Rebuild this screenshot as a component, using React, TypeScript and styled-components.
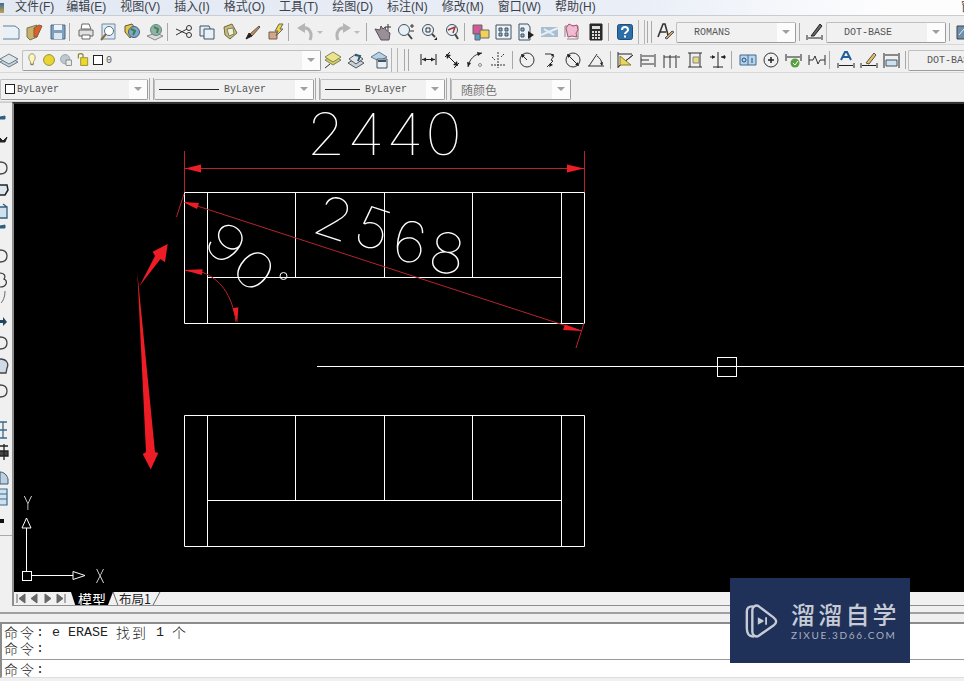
import React from 'react'
import styled, { createGlobalStyle } from 'styled-components'

const GlobalStyle = createGlobalStyle`
  html, body { margin: 0; padding: 0; background: #f0f0f0; }
`

const Page = styled.div`
  position: relative;
  width: 964px;
  height: 681px;
  overflow: hidden;
  display: flex;
  flex-direction: column;
  background: #f0f0f0;
  font-family: "Liberation Sans", "Noto Sans CJK SC", sans-serif;
`
const MenuBar = styled.div`
  height: 16px;
  flex: none;
  box-sizing: border-box;
  display: flex;
  align-items: center;
  gap: 14px;
  background: linear-gradient(to right, #e3e9f3, #e9eef7 65%, #fdfdfe 92%);
  border-bottom: 1px solid #c9ccd0;
  font-size: 12px;
  line-height: 15px;
  color: #3c4148;
  white-space: nowrap;
  overflow: hidden;
  & > span:nth-child(2) { margin-right: -2px; }
`
const AppIcon = styled.div`
  width: 4px;
  height: 10px;
  flex: none;
  margin-right: -3px;
  background: linear-gradient(#3e6c96, #c2a24c);
`
const MenuTail = styled.span`
  width: 3px;
  margin-left: auto;
  overflow: hidden;
  flex: none;
`
const Toolbar = styled.div<{ $height: number; $top: number }>`
  height: ${(p) => p.$height}px;
  padding-top: ${(p) => p.$top}px;
  flex: none;
  box-sizing: border-box;
  display: flex;
  align-items: center;
  background: #f0f0f0;
  border-bottom: 1px solid #d8d8d8;
  overflow: hidden;
`
const Cell = styled.div<{ $w?: number; $shift?: number }>`
  width: ${(p) => p.$w ?? 23}px;
  margin-left: ${(p) => p.$shift ?? 0}px;
  height: 20px;
  flex: none;
  display: flex;
  align-items: center;
  justify-content: center;
`
const Sep = styled.div<{ $l?: number; $r?: number }>`
  width: 1px;
  height: 18px;
  flex: none;
  background: #a8a8a8;
  margin: 0 ${(p) => p.$r ?? 4}px 0 ${(p) => p.$l ?? 1}px;
`
const GroupEnd = styled.div<{ $l: number; $r: number }>`
  width: 5px;
  height: 24px;
  flex: none;
  margin: 0 ${(p) => p.$r}px 0 ${(p) => p.$l}px;
  border-left: 1px solid #b5b5b5;
  border-right: 1px solid #b5b5b5;
`
const Combo = styled.div<{ $w: number; $l?: number; $r?: number }>`
  width: ${(p) => p.$w}px;
  height: 21px;
  flex: none;
  box-sizing: border-box;
  margin: 0 ${(p) => p.$r ?? 0}px 0 ${(p) => p.$l ?? 0}px;
  display: flex;
  align-items: center;
  background: #f1f1f1;
  border: 1px solid #c0c0c0;
  border-right-color: #9c9c9c;
  border-bottom-color: #9c9c9c;
  border-radius: 2px;
  overflow: hidden;
`
const ComboText = styled.div<{ $pad?: number; $gap?: number }>`
  flex: 1;
  min-width: 0;
  padding-left: ${(p) => p.$pad ?? 0}px;
  display: flex;
  align-items: center;
  gap: ${(p) => p.$gap ?? 4}px;
  font: 10px "Liberation Mono", monospace;
  color: #555;
  white-space: nowrap;
`
const ComboCn = styled.span`
  font: 12px "Noto Sans CJK SC", sans-serif;
  color: #777;
`
const ComboArrow = styled.div`
  width: 18px;
  align-self: stretch;
  flex: none;
  background: #fcfcfc;
  display: flex;
  align-items: center;
  justify-content: center;
  &::after {
    content: "";
    border-left: 4px solid transparent;
    border-right: 4px solid transparent;
    border-top: 4px solid #a0a0a0;
  }
`
const LineSample = styled.div<{ $w: number }>`
  width: ${(p) => p.$w}px;
  height: 1px;
  background: #222;
  margin-right: 1px;
  flex: none;
`
const ColorSwatch = styled.div`
  width: 8px;
  height: 8px;
  border: 1px solid #222;
  background: #fff;
  flex: none;
`
const Dropper = styled.div`
  border-left: 3px solid transparent;
  border-right: 3px solid transparent;
  border-top: 3px solid #bcbcbc;
`
const Grips = styled.div<{ $l: number; $r: number }>`
  width: 3px;
  height: 22px;
  flex: none;
  margin: 0 ${(p) => p.$r}px 0 ${(p) => p.$l}px;
  border-left: 1px solid #a9a9a9;
  border-right: 1px solid #a9a9a9;
`
const Main = styled.div`
  display: flex;
  flex: none;
  height: 504px;
`
const Strip = styled.div`
  width: 12px;
  flex: none;
  overflow: hidden;
  display: flex;
  flex-direction: column;
  box-sizing: border-box;
  height: 434px;
  background: #f0f0f0;
  border-top: 1px solid #ccc;
  border-bottom: 1px solid #aaa;
`
const StripItem = styled.div<{ $gap: number }>`
  margin-top: ${(p) => p.$gap}px;
  margin-left: -9px;
  height: 14px;
  flex: none;
`
const Work = styled.div`
  flex: 1;
  min-width: 0;
  display: flex;
  flex-direction: column;
`
const Canvas = styled.div`
  height: 490px;
  flex: none;
  background: #000;
  border-left: 2px solid #8e8e8e;
  border-top: 2px solid #333;
  box-sizing: border-box;
  & svg { display: block; }
`
const TabBar = styled.div`
  height: 14px;
  flex: none;
  display: flex;
  align-items: stretch;
  background: #f1f1f1;
  border-left: 2px solid #8e8e8e;
  border-bottom: 1px solid #8e8e8e;
  box-sizing: border-box;
`
const NavBtn = styled.div`
  width: 13.5px;
  flex: none;
  display: flex;
  align-items: center;
  justify-content: center;
`
const ModelTab = styled.div`
  width: 42px;
  margin-left: 3px;
  flex: none;
  background: #000;
  color: #fff;
  font: 14px/14px "Noto Sans CJK SC", sans-serif;
  text-align: center;
  clip-path: polygon(0 0, 100% 0, 88% 100%, 10% 100%);
`
const LayoutTab = styled.div`
  position: relative;
  width: 47px;
  box-sizing: border-box;
  padding-left: 6px;
  flex: none;
  font: 12.5px/13px "Noto Sans CJK SC", sans-serif;
  color: #222;
  white-space: nowrap;
  &::before,
  &::after {
    content: "";
    position: absolute;
    top: 0;
    height: 13px;
    width: 1px;
    background: #666;
  }
  &::before {
    left: 2px;
    transform: skewX(20deg);
  }
  &::after {
    right: 3px;
    transform: skewX(-28deg);
  }
`
const Command = styled.div`
  flex: 1;
  display: flex;
  flex-direction: column;
  background: #f0f0f0;
`
const SplitLine = styled.div`
  margin-top: 6px;
  height: 2px;
  flex: none;
  background: #a0a0a0;
`
const CommandBox = styled.div`
  margin-top: 8px;
  background: #fff;
  border-top: 2px solid #8c8c8c;
  border-left: 2px solid #8c8c8c;
  padding-left: 2px;
  height: 37px;
  flex: none;
  box-sizing: border-box;
  display: flex;
  flex-direction: column;
`
const CommandRow = styled.div<{ $h?: number }>`
  height: ${(p) => p.$h ?? 16}px;
  flex: none;
  display: flex;
  align-items: center;
  font: 13.33px/15px "Liberation Mono", monospace;
  white-space: pre;
  color: #222;
`
const Cn = styled.span`
  font: 300 14px/15px "Noto Sans CJK SC", sans-serif;
  letter-spacing: 2px;
`
const InputBox = styled(CommandBox)`
  margin-top: 0;
  height: 19px;
  border-top: 1px solid #9a9a9a;
  border-bottom: 1px solid #ddd;
`
const Logo = styled.div`
  position: absolute;
  left: 730px;
  top: 578px;
  width: 180px;
  height: 85px;
  background: #1f3158;
  color: #c6cbd5;
  display: flex;
  align-items: center;
  padding-left: 15px;
  box-sizing: border-box;
  gap: 13px;
`
const LogoText = styled.div`
  display: flex;
  flex-direction: column;
  margin-top: -1px;
`
const LogoName = styled.div`
  font: 500 24px/30px "Noto Sans CJK SC", sans-serif;
  letter-spacing: 3.2px;
  white-space: nowrap;
`
const LogoSite = styled.div`
  font: 10px/12px "Lato", sans-serif;
  letter-spacing: 1.7px;
  color: #a9b0bf;
  white-space: nowrap;
`
const SmallIcon = styled.div`
  width: 14px;
  height: 14px;
  flex: none;
  & svg { width: 14px; height: 14px; display: block; }
`

const I = ({ children }: { children: React.ReactNode }) => (
  <svg width="18" height="18" viewBox="0 0 18 18" fill="none" stroke="#3e5364" strokeWidth="1">
    {children}
  </svg>
)

const dim = (
  <>
    <path d="M1 3v11M16 3v11M2 8.500h13" stroke="#222" />
    <path d="M2 8.500l4-2v4zM15 8.500l-4-2v4z" fill="#222" stroke="none" />
  </>
)
const circle = <circle cx="9" cy="9" r="7" stroke="#333" />

const icons: Record<string, React.ReactNode> = {
  new: <path d="M-2 3h14l4 3v10H-2z" fill="#e9f0f6" stroke="#5c7f9b" />,
  open: (
    <>
      <path d="M1 5l10-3v12l-7 3-3-3z" fill="#c9b06a" stroke="#6e7a55" />
      <path d="M8 5l5-3 3 1-5 11H8z" fill="#d95f2b" stroke="#8a5a3a" />
    </>
  ),
  save: (
    <>
      <path d="M2 2h14v14H2z" fill="#7e9fbe" stroke="#4b6a86" />
      <path d="M5 2h8v5H5z" fill="#eef3f7" stroke="none" />
      <path d="M5 10h8v6H5z" fill="#dce6ef" stroke="none" />
    </>
  ),
  print: (
    <>
      <path d="M5 1h7l2 5H4z" fill="#fff" stroke="#666" />
      <path d="M2 7h14v6H2z" fill="#e2e2e2" stroke="#666" />
      <path d="M5 12h8v4H5z" fill="#fff" stroke="#666" />
    </>
  ),
  preview: (
    <>
      <path d="M2 1h13v15H2z" fill="#dfeaf3" stroke="#6d8ba3" />
      <circle cx="9" cy="8" r="4.500" fill="#fff" stroke="#53707f" />
      <path d="M6 11l-5 6" strokeWidth="2" stroke="#8a6a3a" />
    </>
  ),
  publish: (
    <>
      <path d="M2 3l7-2 4 5-6 9-5-6z" fill="#e8c83c" stroke="#555" />
      <circle cx="11" cy="9" r="5.500" fill="#7fa8cc" stroke="#44617a" />
      <path d="M8 6l4 2-2 4" stroke="#3f7d4c" strokeWidth="2" />
    </>
  ),
  plot: (
    <>
      <path d="M1 13l9-3 7 3-8 4z" fill="#ddd" stroke="#888" />
      <circle cx="10" cy="7" r="5.500" fill="#8fb4a6" stroke="#688" />
      <path d="M8 4l4 2-1 4" stroke="#4c7f5c" strokeWidth="2" />
    </>
  ),
  cut: (
    <>
      <path d="M1 6l11 5M1 12l11-6" stroke="#333" />
      <circle cx="14" cy="5" r="2.500" stroke="#333" />
      <circle cx="14" cy="12" r="2.500" stroke="#333" />
    </>
  ),
  copy: (
    <>
      <path d="M2 3h9l1 2v8H2z" fill="#e4edf5" />
      <path d="M6 6h10v10H6z" fill="#e9f1f8" />
    </>
  ),
  paste: (
    <>
      <path d="M3 4l8-3 5 9-7 6-5-4z" fill="#d0b878" stroke="#6e6a4a" />
      <path d="M6 6l6-1 1 6-5 2z" fill="#eef2df" stroke="#6f8a5a" />
    </>
  ),
  brush: (
    <>
      <path d="M6 11l9-8 1 1-8 9z" fill="#d88a4a" stroke="#555" />
      <path d="M2 16l3-6 3 3z" fill="#222" stroke="#222" />
    </>
  ),
  match: (
    <>
      <path d="M2 9h8v7H2z" fill="#d3a888" stroke="#7a5a4a" />
      <path d="M12 1l-4 7h3l-2 5 7-7h-3l3-5z" fill="#f2d43c" stroke="#666" />
    </>
  ),
  undo: (
    <>
      <path d="M14 17C17 10 13 4 7 5" stroke="#b5b5b5" strokeWidth="3" />
      <path d="M9 0L1 5l8 5z" fill="#b5b5b5" stroke="none" />
    </>
  ),
  redo: (
    <>
      <path d="M4 17C1 10 5 4 11 5" stroke="#b5b5b5" strokeWidth="3" />
      <path d="M9 0l8 5-8 5z" fill="#b5b5b5" stroke="none" />
    </>
  ),
  pan: (
    <>
      <path d="M1 6l6 11h8l1-7-4-3-1-3-2 2-2-3-1 4z" fill="#9a8f96" stroke="#5a5058" />
      <path d="M14 1v7M11 4h6" stroke="#333" />
    </>
  ),
  zoomrt: (
    <>
      <circle cx="7" cy="7" r="5.500" fill="#e8f0f6" />
      <path d="M11 11l4 5" strokeWidth="2" stroke="#444" />
      <path d="M13 3h4M15 1v4M13 8h4" stroke="#333" />
    </>
  ),
  zoomwin: (
    <>
      <circle cx="8" cy="7" r="5.500" fill="#e8f0f6" />
      <path d="M6 5h4v4H6z" stroke="#333" />
      <path d="M12 11l3 3" strokeWidth="2" stroke="#444" />
      <path d="M14 17h3v-3z" fill="#222" stroke="none" />
    </>
  ),
  zoomprev: (
    <>
      <circle cx="9" cy="7" r="5.500" fill="#e8f0f6" />
      <path d="M5 7l7-3-2 6" stroke="#a03838" strokeWidth="1.500" />
      <path d="M12 11l3 5" strokeWidth="2" stroke="#444" />
    </>
  ),
  props: (
    <>
      <path d="M1 2h9v9H1z" fill="#d05a9a" stroke="#666" />
      <path d="M8 7h9v8H8z" fill="#f3d05a" stroke="#666" />
      <path d="M3 11h5v6H3z" fill="#5aa0d0" stroke="#666" />
    </>
  ),
  grid: (
    <>
      <path d="M1 2h15v14H1z" fill="#eef3f7" />
      <path d="M4 5h3v3H4zM10 5h3v3h-3zM4 10h3v3H4zM10 10h3v3h-3z" fill="#8fb0cc" />
    </>
  ),
  sheet: (
    <>
      <path d="M1 1h9l2 3v13H1z" fill="#e9f0f6" />
      <path d="M3 5h3v3H3zM3 11h3v3H3z" fill="#8fb0cc" />
      <path d="M10 8l6 4-6 4z" fill="#222" stroke="none" />
    </>
  ),
  tools: (
    <>
      <path d="M0 4h17v10H0z" fill="#a8bfd2" stroke="none" />
      <path d="M0 12l17-7M3 6l10 6" stroke="#e7eef4" strokeWidth="2" />
    </>
  ),
  mark: (
    <>
      <path d="M1 14V3h13v13H3" stroke="#888" />
      <path d="M2 5l3-4 4 2 4-1 1 5-2 3 1 4-5-1-4 1z" fill="#eebbd0" stroke="#b04a70" />
    </>
  ),
  calc: (
    <>
      <path d="M3 1h12v16H3z" fill="#2c2c2c" stroke="#222" />
      <path d="M5 3h8v3H5z" fill="#ddd" stroke="none" />
      <path d="M5 8h2v2H5zM8 8h2v2H8zM11 8h2v2h-2zM5 11h2v2H5zM8 11h2v2H8zM11 11h2v2h-2zM5 14h2v2H5zM8 14h2v2H8zM11 14h2v2h-2z" fill="#ddd" stroke="none" />
    </>
  ),
  help: (
    <>
      <rect x="1.500" y="1.500" width="15" height="15" rx="2" fill="#2b6ea8" stroke="#1f4f7d" />
      <path d="M6 7c0-4 6-4 6 0 0 2-3 2-3 4" stroke="#fff" strokeWidth="2" />
      <path d="M8 12.500h2v2H8z" fill="#fff" stroke="none" />
    </>
  ),
  tstyle: (
    <>
      <path d="M1 14L6 1h2l3 11M3 9h6" stroke="#333" strokeWidth="1.600" />
      <path d="M8 15l7-7 2 1-7 7z" fill="#c8a46a" stroke="#555" />
    </>
  ),
  dstyle: (
    <>
      <path d="M1 12v5M16 12v5M2 15h13" stroke="#222" />
      <path d="M5 13l9-12 2 2-8 10z" fill="#666" stroke="#222" />
    </>
  ),
  dmanager: (
    <>
      <path d="M1 3h16v13H1z" fill="#6d8fae" stroke="#444" />
      <path d="M3 12l5-6 3 3 4-3" stroke="#eee" />
    </>
  ),
  layers: (
    <>
      <path d="M0 11l9-5 9 5-9 5z" fill="#c7d2da" stroke="#6b7b88" />
      <path d="M0 8l9-5 9 5-9 5z" fill="#dfe6ea" stroke="#6b7b88" />
    </>
  ),
  layerA: (
    <>
      <path d="M1 9l8-5 8 5-8 5z" fill="#d8c85a" stroke="#786" />
      <path d="M1 6l8-5 8 5-8 5z" fill="#eee38a" stroke="#786" />
      <path d="M1 17l5-4" stroke="#333" />
    </>
  ),
  layerB: (
    <>
      <path d="M1 12l8-5 8 5-8 5z" fill="#c7d2da" stroke="#555" />
      <path d="M2 8l7-5 7 5-7 5z" fill="#dfe6ea" stroke="#555" />
      <path d="M8 4l5 1-2 5" stroke="#33566f" strokeWidth="2" />
    </>
  ),
  layerC: (
    <>
      <path d="M1 6l8-5 8 5-8 4z" fill="#b9d0e3" stroke="#5a7d9a" />
      <path d="M7 8h10v9H7z" fill="#e8f0f6" stroke="#3e5364" />
      <path d="M8 10h8" stroke="#3e5364" strokeWidth="2" />
    </>
  ),
  dimLinear: dim,
  dimAligned: (
    <>
      <path d="M2 6l5-5M11 17l5-5M4 4l10 10" stroke="#222" />
      <path d="M3 3l5 1-4 4zM15 15l-5-1 4-4z" fill="#222" stroke="none" />
    </>
  ),
  dimArc: (
    <>
      <path d="M2 16C3 9 8 3 16 2" stroke="#333" />
      <path d="M2 16l-1-5 4 1zM16 2l-5-1 1 4z" fill="#222" stroke="none" />
      <circle cx="14" cy="14" r="1.500" stroke="#888" />
    </>
  ),
  dimOrd: <path d="M9 1v16M2 14h14M3 6l3 3M15 3l-3 3" stroke="#333" strokeDasharray="2 1" />,
  dimRadius: (
    <>
      {circle}
      <path d="M9 9L4 4" stroke="#222" />
      <path d="M3 3l4 1-3 3z" fill="#222" stroke="none" />
    </>
  ),
  dimJog: (
    <>
      <path d="M4 3h6l3 2-3 4 2 1-6 6" stroke="#333" />
      <path d="M8 16l1-4 3 2zM13 3l-3 0 1 3z" fill="#222" stroke="none" />
    </>
  ),
  dimDia: (
    <>
      {circle}
      <path d="M4 4l10 10" stroke="#222" />
      <path d="M3 3l4 1-3 3zM15 15l-4-1 3-3z" fill="#222" stroke="none" />
    </>
  ),
  dimAngle: (
    <>
      <path d="M1 15h16M2 15L10 3" stroke="#333" />
      <path d="M10 5c3 2 5 5 5 9" stroke="#333" />
      <path d="M15 15l-2-3 3-1z" fill="#222" stroke="none" />
    </>
  ),
  dimQuick: (
    <>
      <path d="M1 1v16M1 16L16 4z" stroke="#333" />
      <path d="M3 5l11 9H3z" fill="#e8d560" stroke="#8a7a30" />
      <path d="M1 3h14" stroke="#222" />
    </>
  ),
  dimBase: <path d="M1 3v13M15 3v13M2 5h12M2 13h12M1 9h8" stroke="#333" />,
  dimCont: <path d="M1 4v13M7 4v13M13 4v13M1 6h12M14 6h3" stroke="#333" />,
  dimSpace: (
    <>
      <path d="M2 2h14M2 16h14M4 2v14M14 2v14" stroke="#333" />
      <path d="M7 6h6v6H7z" fill="#e4d98a" stroke="#887" />
    </>
  ),
  dimBreak: (
    <>
      <path d="M1 6h5M12 6h5M9 1v16M4 16h10" stroke="#222" />
      <path d="M12 6l4-2v4zM6 6L3 4v4z" fill="#222" stroke="none" />
    </>
  ),
  tol: (
    <>
      <path d="M1 4h16v10H1z" fill="#b8d3ea" stroke="#3c6a90" />
      <path d="M9 4v10" stroke="#3c6a90" />
      <circle cx="5" cy="9" r="2" stroke="#1f4f7d" />
      <path d="M13 7v5" stroke="#1f4f7d" />
    </>
  ),
  center: (
    <>
      {circle}
      <path d="M6 9h6M9 6v6" stroke="#222" strokeWidth="1.500" />
    </>
  ),
  insp: (
    <>
      <path d="M1 3v7M16 3v7M2 6h13" stroke="#222" />
      <circle cx="10" cy="12" r="4.500" fill="#5aa040" stroke="none" />
      <path d="M8 12l2 2 3-4" stroke="#fff" />
    </>
  ),
  jog: <path d="M1 4v10M1 9h4l2-4 3 8 2-4h5M17 4v10" stroke="#333" />,
  dimText: (
    <>
      <path d="M4 9l4-8h2l4 8M6 6h6" stroke="#20609a" strokeWidth="2" />
      <path d="M1 12v5M17 12v5M2 14.500h14" stroke="#222" />
    </>
  ),
  dimEdit: (
    <>
      <path d="M1 12v5M17 12v5M2 14.500h14" stroke="#222" />
      <path d="M6 12l8-10 2 2-7 9z" fill="#e6bf5a" stroke="#555" />
    </>
  ),
  dimUpdate: (
    <>
      <path d="M1 2v15M16 2v15M2 4h13" stroke="#222" />
      <path d="M3 9h11v6H3z" fill="#cfe0ee" stroke="#3e5364" />
    </>
  ),
  bulb: (
    <>
      <path d="M9 1c5 0 5 7 2 10v3H7v-3C4 8 4 1 9 1z" fill="#fbf5c0" stroke="#8a8450" />
      <path d="M7 15h4" stroke="#555" />
    </>
  ),
  sun: <circle cx="9" cy="9" r="7" fill="#e8d532" stroke="#857a2a" />,
  vp: (
    <>
      <circle cx="8" cy="8" r="6" fill="#bfc8ce" stroke="#8a9aa4" />
      <path d="M9 9h7v7H9z" fill="#eee" stroke="#777" />
    </>
  ),
  lock: (
    <>
      <path d="M3 7V3c0-3 6-3 6 0v2" stroke="#8a8020" strokeWidth="1.500" />
      <path d="M6 6h9v10H6z" fill="#ecd92e" stroke="#8a8020" />
    </>
  ),
  // the side strip is cropped, only the right end of each tool shows
  sDash: <path d="M9 8l5-1v3H9z" fill="#2f5f80" stroke="#2f5f80" />,
  sCheck: <path d="M9 7l3 3 4-4-2 5H9z" fill="#222" stroke="#222" />,
  sRing: <path d="M9 3c5 0 7 3 7 6s-2 6-7 6" stroke="#444" strokeWidth="1.300" />,
  sHex: <path d="M9 4h7l1 5-3 5H9" fill="#dde7f0" stroke="#222" strokeWidth="1.500" />,
  sBox: <path d="M9 4h7v11H9M12 1l4 3" fill="#cfe0ee" stroke="#2f5f80" strokeWidth="1.300" />,
  sBlob: <path d="M9 2c7 0 9 5 7 9l-1 5H9" fill="#cfdce8" stroke="#444" strokeWidth="1.300" />,
  sCloud: <path d="M9 2c5 0 6 4 4 6 4 2 3 8-4 8" stroke="#333" strokeWidth="1.200" />,
  sCurve: <path d="M14 3c0 6-2 10-4 12" stroke="#666" />,
  sArrow: <path d="M9 7h3V4l4 5-4 4v-3H9z" fill="#20455f" stroke="none" />,
  sDimA: <path d="M9 1h7M12 1v16M9 9h7M9 17h7" stroke="#3a6a8c" strokeWidth="1.300" />,
  sDimB: <path d="M9 3h8M13 1v16M9 8h8v5H9" fill="#444" stroke="#222" strokeWidth="1.300" />,
  sArch: <path d="M9 3c4 0 7 3 8 7v5H9z" fill="#bcd0e2" stroke="#3e5a70" />,
  sList: <path d="M9 1h7v16H9M9 6h7M9 11h7" fill="#cfe0ee" stroke="#3a6a8c" strokeWidth="1.200" />,
  sDot: <path d="M9 7h4v4H9z" fill="#111" stroke="none" />,
}

const Tool = ({ name, w, shift }: { name: string; w?: number; shift?: number }) => (
  <Cell $w={w} $shift={shift}>
    <I>{icons[name]}</I>
  </Cell>
)

const menu = ['文件(F)', '编辑(E)', '视图(V)', '插入(I)', '格式(O)', '工具(T)', '绘图(D)', '标注(N)', '修改(M)', '窗口(W)', '帮助(H)']

const strip: [number, string][] = [
  [6, 'sDash'], [8, 'sCheck'], [14, 'sRing'], [8, 'sHex'], [8, 'sBox'],
  [1, 'sDash'], [15, 'sRing'], [10, 'sCloud'], [3, 'sCurve'], [11, 'sArrow'],
  [7, 'sRing'], [9, 'sBlob'], [11, 'sRing'], [25, 'sDimA'], [8, 'sDimB'],
  [12, 'sArch'], [5, 'sList'], [10, 'sDot'],
]

const ToolGroup = ({ names }: { names: string[] }) => (
  <>
    {names.map((n) => (
      <Tool key={n} name={n} />
    ))}
  </>
)

const Digit = ({ ch, x, y, size = 58, rot = 0, sx = 1.08, weight = 100 }: { ch: string; x: number; y: number; size?: number; rot?: number; sx?: number; weight?: number }) => (
  <text
    transform={`translate(${x} ${y}) rotate(${rot}) scale(${sx} 1)`}
    textAnchor="middle"
    dominantBaseline="central"
    fontFamily="Inter, sans-serif"
    fontWeight={weight}
    fontSize={size}
    fill="#fff"
    stroke="none"
  >
    {ch}
  </text>
)

const Frame = ({ top, mid, bottom }: { top: number; mid: number; bottom: number }) => (
  <path
    d={`M184.500 ${top}H584.500V${bottom}H184.500ZM207.500 ${top}V${bottom}M561.500 ${top}V${bottom}M295.500 ${top}V${mid}M384.500 ${top}V${mid}M472.500 ${top}V${mid}M207.500 ${mid}H561.500`}
  />
)

const Drawing = () => (
  <svg width="950" height="488" viewBox="14 104 950 488" fill="none" stroke="#fff" strokeWidth="1">
    <Frame top={192.5} mid={277.5} bottom={323.5} />
    <Frame top={415.5} mid={500.5} bottom={546.5} />
    <path d="M317 366.500H964" />
    <rect x="717.500" y="357.500" width="19" height="19" />
    <circle cx="283.500" cy="276" r="3.500" />

    <g opacity="0.999">
      <Digit ch="2" x={326} y={134} />
      <Digit ch="4" x={366} y={134} />
      <Digit ch="4" x={405} y={134} />
      <Digit ch="0" x={443.500} y={134} />
      <Digit ch="9" x={226} y={243} size={50} rot={40} sx={1.3} />
      <Digit ch="0" x={254} y={270} size={50} rot={40} sx={1.3} />
      <Digit ch="2" x={334} y={218} size={56} rot={18} />
      <Digit ch="5" x={373} y={228} size={56} rot={18} />
      <Digit ch="6" x={410} y={242} size={56} rot={8} />
      <Digit ch="8" x={447} y={253} size={56} rot={8} />
      <Digit ch="X" x={100} y={576.500} size={18} sx={0.75} weight={200} />
      <Digit ch="Y" x={28} y={503.500} size={18} sx={0.75} weight={200} />
    </g>

    <g stroke="#b5252a">
      <path d="M184.500 151V192M584.500 151V192M185 168.500H584" />
      <path d="M185 202L582 331" />
      <path d="M184 194L176.500 217M584 323L576 348" />
      <path d="M185 270.500L203 272.500C219 279 232 293 236 322" />
    </g>
    <g fill="#ee1c25" stroke="none">
      <path d="M185 168.500L201 164.500V172.500Z" />
      <path d="M584 168.500L567 164.500V172.500Z" />
      <path d="M183 202L199 203L197 209Z" />
      <path d="M582 331L565 324.500L563 330Z" />
      <path d="M184 270L202.700 269.300L201.700 275Z" />
      <path d="M237.300 322.700L232.700 308.300L238.300 307.300Z" />
      <path d="M139.500 286L155 256L152.700 251.700L167.700 244L165 262.300L160.500 259Z" />
      <path d="M137.300 272L146 452L142.700 454L150.700 469.500L158.300 453L155 452Z" />
    </g>

    <path d="M26.500 571V528M32 575.500H73" />
    <rect x="22.500" y="571.500" width="9" height="9" />
    <path d="M26.500 518L22 528H31Z" />
    <path d="M73 571.500V579.500L85 575.500Z" />
  </svg>
)

const Nav = ({ d }: { d: string }) => (
  <NavBtn>
    <svg width="10" height="11" viewBox="0 0 10 11" fill="#666" stroke="#666">
      <path d={d} />
    </svg>
  </NavBtn>
)

export default function App() {
  return (
    <Page>
      <GlobalStyle />
      <MenuBar>
        <AppIcon />
        {menu.map((m) => (
          <span key={m}>{m}</span>
        ))}
        <MenuTail>窗</MenuTail>
      </MenuBar>

      <Toolbar $height={29} $top={4}>
        <ToolGroup names={['new', 'open', 'save']} />
        <Sep $l={0} />
        <ToolGroup names={['print', 'preview', 'publish', 'plot']} />
        <Sep />
        <ToolGroup names={['cut', 'copy', 'paste', 'brush', 'match']} />
        <Sep />
        <Tool name="undo" />
        <Cell $w={8}><Dropper /></Cell>
        <Tool name="redo" shift={7} />
        <Cell $w={6}><Dropper /></Cell>
        <Sep $l={6} />
        <ToolGroup names={['pan', 'zoomrt', 'zoomwin', 'zoomprev']} />
        <Sep />
        <ToolGroup names={['props', 'grid', 'sheet', 'tools', 'mark', 'calc']} />
        <Sep />
        <Tool name="help" />
        <GroupEnd $l={2} $r={2} />
        <Grips $l={0} $r={2} />
        <Tool name="tstyle" />
        <Combo $w={120} $l={-1}>
          <ComboText $pad={17}>ROMANS</ComboText>
          <ComboArrow />
        </Combo>
        <Sep $l={3} $r={3} />
        <Tool name="dstyle" />
        <Combo $w={120}>
          <ComboText $pad={17}>DOT-BASE</ComboText>
          <ComboArrow />
        </Combo>
        <Sep $l={3} $r={3} />
        <Tool name="dmanager" />
      </Toolbar>

      <Toolbar $height={28} $top={3}>
        <Tool name="layers" shift={-3} />
        <Combo $w={299} $l={2}>
          <ComboText $pad={2} $gap={3}>
            <SmallIcon><I>{icons.bulb}</I></SmallIcon>
            <SmallIcon><I>{icons.sun}</I></SmallIcon>
            <SmallIcon><I>{icons.vp}</I></SmallIcon>
            <SmallIcon><I>{icons.lock}</I></SmallIcon>
            <ColorSwatch />
            0
          </ComboText>
          <ComboArrow />
        </Combo>
        <ToolGroup names={['layerA', 'layerB', 'layerC']} />
        <GroupEnd $l={1} $r={6} />
        <Grips $l={0} $r={8} />
        <ToolGroup names={['dimLinear', 'dimAligned', 'dimArc', 'dimOrd']} />
        <Sep $l={3} $r={2} />
        <ToolGroup names={['dimRadius', 'dimJog', 'dimDia', 'dimAngle']} />
        <Sep $l={3} $r={3} />
        <ToolGroup names={['dimQuick', 'dimBase', 'dimCont', 'dimSpace', 'dimBreak']} />
        <Sep $l={2} />
        <ToolGroup names={['tol', 'center', 'insp', 'jog']} />
        <Sep />
        <ToolGroup names={['dimText', 'dimEdit', 'dimUpdate']} />
        <Sep $l={2} $r={2} />
        <Combo $w={70}>
          <ComboText $pad={18}>DOT-BASE</ComboText>
        </Combo>
      </Toolbar>

      <Toolbar $height={29} $top={4}>
        <Combo $w={148}>
          <ComboText $pad={4} $gap={2}>
            <ColorSwatch />
            ByLayer
          </ComboText>
          <ComboArrow />
        </Combo>
        <Grips $l={1} $r={0} />
        <Combo $w={160}>
          <ComboText $pad={4}>
            <LineSample $w={60} />
            ByLayer
          </ComboText>
          <ComboArrow />
        </Combo>
        <Grips $l={1} $r={0} />
        <Combo $w={125}>
          <ComboText $pad={4}>
            <LineSample $w={35} />
            ByLayer
          </ComboText>
          <ComboArrow />
        </Combo>
        <Grips $l={1} $r={0} />
        <Combo $w={120}>
          <ComboText $pad={9}>
            <ComboCn>随颜色</ComboCn>
          </ComboText>
          <ComboArrow />
        </Combo>
      </Toolbar>

      <Main>
        <Strip>
          {strip.map(([gap, name], i) => (
            <StripItem key={i} $gap={gap}>
              <I>{icons[name]}</I>
            </StripItem>
          ))}
        </Strip>
        <Work>
          <Canvas>
            <Drawing />
          </Canvas>
          <TabBar>
            <Nav d="M1 1v9M9 1v9L3 5.500z" />
            <Nav d="M8 1v9L2 5.500z" />
            <Nav d="M2 1v9l6-4.500z" />
            <Nav d="M9 1v9M1 1v9l6-4.500z" />
            <ModelTab>模型</ModelTab>
            <LayoutTab>布局1</LayoutTab>
          </TabBar>
        </Work>
      </Main>

      <Command>
        <SplitLine />
        <CommandBox>
          <CommandRow>
            <Cn>命令</Cn>: e ERASE <Cn>找到</Cn> 1 <Cn>个</Cn>
          </CommandRow>
          <CommandRow>
            <Cn>命令</Cn>:
          </CommandRow>
        </CommandBox>
        <InputBox>
          <CommandRow $h={18}>
            <Cn>命令</Cn>:
          </CommandRow>
        </InputBox>
      </Command>

      <Logo>
        <svg width="33" height="36" viewBox="0 0 36 38" fill="none" stroke="#c6cbd5" strokeWidth="2.600" strokeLinejoin="round">
          <path d="M8 3C4 3 2 5 2 9V27C2 33 5 36 9 36" strokeLinecap="round" />
          <path d="M8 7C8 3 12 1 15 3L31 15C35 18 35 21 31 24L15 35C12 37 8 35 8 31Z" />
          <path d="M14 15L21 19L14 23Z" fill="#c6cbd5" stroke="none" />
          <path d="M23 15V23" strokeWidth="2" />
        </svg>
        <LogoText>
          <LogoName>溜溜自学</LogoName>
          <LogoSite>ZIXUE.3D66.COM</LogoSite>
        </LogoText>
      </Logo>
    </Page>
  )
}
